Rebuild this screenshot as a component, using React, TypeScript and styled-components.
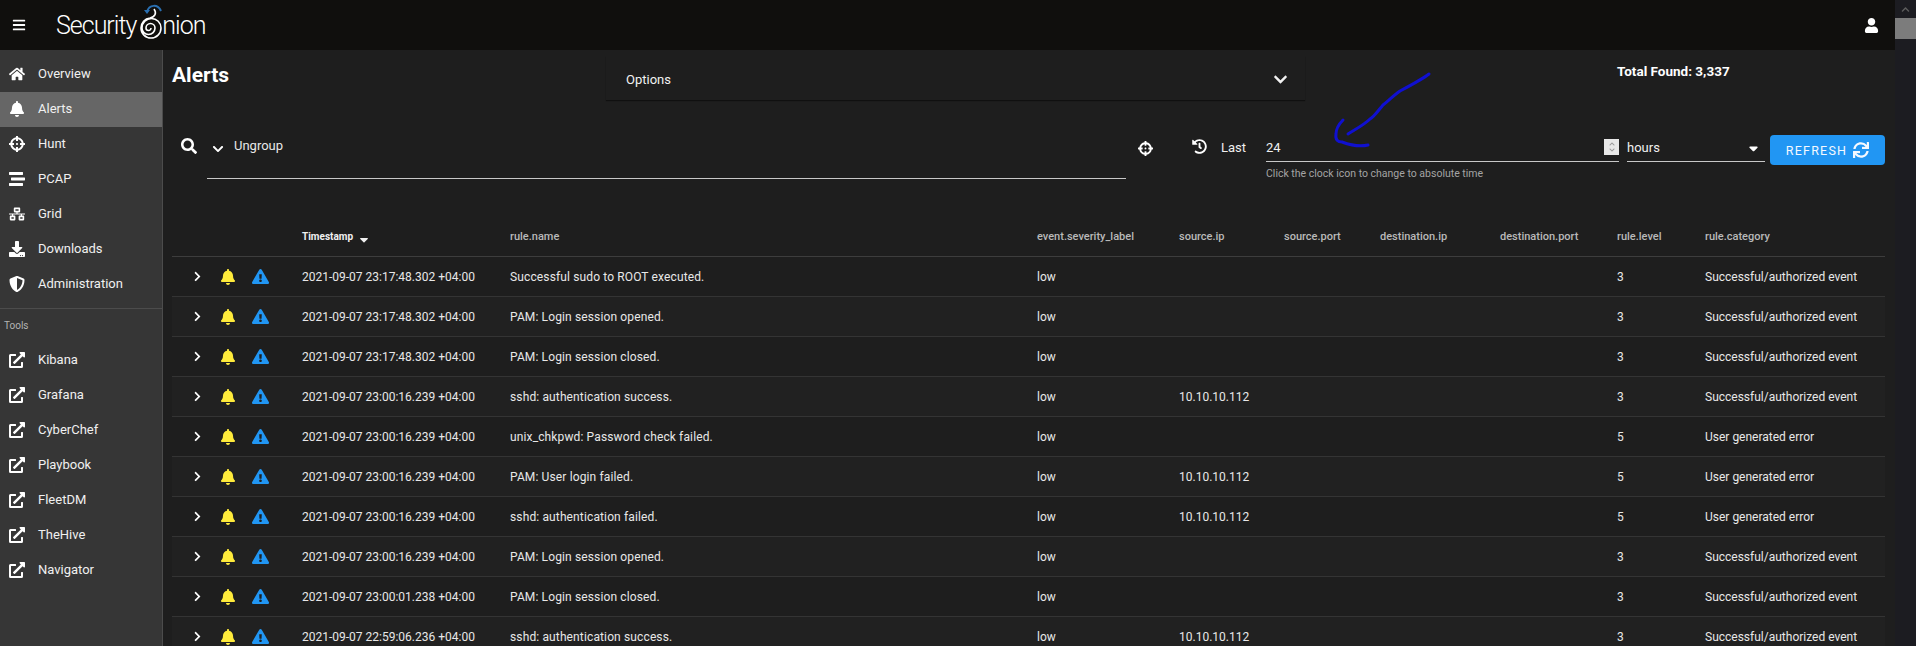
import React from "react";
import styled, { createGlobalStyle } from "styled-components";
import {
  FaBars,
  FaBell,
  FaChevronDown,
  FaChevronRight,
  FaChevronUp,
  FaCrosshairs,
  FaDownload,
  FaExclamationTriangle,
  FaExternalLinkAlt,
  FaHistory,
  FaHome,
  FaNetworkWired,
  FaSearch,
  FaShieldAlt,
  FaSortDown,
  FaStream,
  FaSync,
  FaUser,
} from "react-icons/fa";

const GlobalStyle = createGlobalStyle`
  html, body {
    margin: 0;
    height: 100%;
    overflow: hidden;
    background: #1e1e1e;
    font-family: Roboto, "Liberation Sans", sans-serif;
    color: #fff;
  }
`;

const COLUMNS = "130px 208px 527px 142px 105px 96px 120px 117px 88px 181px";

const Shell = styled.div`
  position: relative;
  display: flex;
  width: 100%;
  height: 100vh;
  overflow: hidden;
`;

const Page = styled.div`
  flex: 1;
  min-width: 0;
  display: flex;
  flex-direction: column;
`;

const TopBar = styled.header`
  flex: 0 0 50px;
  display: flex;
  align-items: center;
  padding: 0 16px 0 12px;
  background: #100f0d;
  font-size: 14px;
`;

const Logo = styled.div`
  display: flex;
  align-items: center;
  margin-left: 30px;
  font-family: Roboto, sans-serif;
  font-weight: 300;
  font-size: 25px;
  letter-spacing: -1px;
  color: #fff;
`;

const LogoMark = styled.svg`
  width: 24px;
  height: 42px;
  margin: -6px 0 0 2px;
`;

const UserSlot = styled.div`
  margin-left: auto;
  display: flex;
  font-size: 15px;
`;

const Body = styled.div`
  flex: 1;
  min-height: 0;
  display: flex;
`;

const Sidebar = styled.nav`
  flex: 0 0 162px;
  padding-top: 7px;
  background: #363636;
  border-right: 1px solid #4c4c4c;
`;

const NavItem = styled.div<{ $active?: boolean }>`
  height: 33px;
  display: flex;
  align-items: center;
  padding: 0 0 2px 9px;
  font-size: 13px;
  color: #f0f0f0;
  background: ${(p) => (p.$active ? "#666666" : "transparent")};
`;

const NavIcon = styled.span`
  flex: 0 0 29px;
  display: flex;
  align-items: center;
  font-size: 16px;
  color: #fff;
`;

const NavDivider = styled.div`
  height: 1px;
  margin-top: 6px;
  background: #4c4c4c;
`;

const NavHeading = styled.div`
  height: 34px;
  padding-left: 4px;
  line-height: 34px;
  font-size: 10px;
  color: #b4b4b4;
`;

const Main = styled.main`
  flex: 1;
  min-width: 0;
  padding: 6px 10px 0 9px;
`;

const HeadRow = styled.div`
  display: flex;
  align-items: flex-start;
`;

const Title = styled.h1`
  flex: 0 0 434px;
  margin: 7px 0 0;
  font-size: 21px;
  line-height: 24px;
  font-weight: 700;
`;

const OptionsPanel = styled.div`
  flex: 0 0 699px;
  height: 44px;
  box-sizing: border-box;
  display: flex;
  align-items: center;
  justify-content: space-between;
  padding: 2px 17px 0 20px;
  font-size: 13px;
  color: #f2f2f2;
  background: #1e1e1e;
  box-shadow: 0 1px 1px rgba(0, 0, 0, 0.45);
  & > svg {
    font-size: 15px;
  }
`;

const TotalFound = styled.div`
  margin: 7px 0 0 312px;
  font-size: 13.5px;
  line-height: 16px;
  font-weight: 700;
`;

const FilterRow = styled.div`
  display: flex;
  align-items: flex-start;
  margin-top: 30px;
`;

const SearchGroup = styled.div`
  flex: 0 0 954px;
  display: flex;
  padding-left: 9px;
  box-sizing: border-box;
`;

const SearchIconSlot = styled.span`
  flex: 0 0 26px;
  display: flex;
  padding-top: 8px;
  font-size: 16px;
`;

const SearchBox = styled.div`
  flex: 1;
  height: 48px;
  display: flex;
  align-items: flex-start;
  gap: 10px;
  padding-left: 5px;
  border-bottom: 1px solid #c8c8c8;
  font-size: 13px;
  color: #e8e8e8;
`;

const GroupChevron = styled.span`
  display: flex;
  padding-top: 13px;
  font-size: 12px;
  color: #fff;
`;

const GroupLabel = styled.span`
  padding-top: 8px;
  line-height: 16px;
`;

const ActionIcon = styled.span<{ $left: number; $top: number }>`
  display: flex;
  margin-left: ${(p) => p.$left}px;
  padding-top: ${(p) => p.$top}px;
  font-size: 15px;
`;

const LastLabel = styled.span`
  margin-left: 14px;
  padding-top: 10px;
  width: 46px;
  font-size: 13px;
  line-height: 16px;
  color: #f0f0f0;
`;

const TimeColumn = styled.div`
  flex: 0 0 353px;
`;

const FieldLine = styled.div`
  height: 31px;
  display: flex;
  align-items: flex-start;
  justify-content: space-between;
  border-bottom: 1px solid #c8c8c8;
  font-size: 13px;
  color: #f0f0f0;
`;

const FieldValue = styled.span`
  padding-top: 10px;
  line-height: 16px;
`;

const Spinner = styled.span`
  width: 15px;
  height: 16px;
  margin-top: 9px;
  display: flex;
  flex-direction: column;
  align-items: center;
  justify-content: center;
  background: #e8e8e8;
  font-size: 6px;
  color: #9a9a9a;
`;

const Hint = styled.div`
  margin-top: 6px;
  font-size: 10.5px;
  line-height: 12px;
  color: #a4a4a4;
`;

const UnitSelect = styled(FieldLine)`
  flex: 0 0 138px;
  margin-left: 8px;
`;

const SelectCaret = styled.span`
  display: flex;
  padding: 8px 4px 0 0;
  font-size: 15px;
  color: #fff;
`;

const RefreshButton = styled.button`
  flex: 0 0 115px;
  height: 30px;
  margin: 5px 0 0 5px;
  display: flex;
  align-items: center;
  justify-content: center;
  gap: 6px;
  padding: 0;
  border: 0;
  border-radius: 4px;
  background: #2196f3;
  color: #f4f9ff;
  font-family: inherit;
  font-size: 12.5px;
  letter-spacing: 1.2px;
  text-transform: uppercase;
  & > svg {
    font-size: 16px;
  }
`;

const Table = styled.div`
  margin-top: 29px;
`;

const HeaderRow = styled.div`
  height: 39px;
  padding-top: 8px;
  display: grid;
  grid-template-columns: ${COLUMNS};
  align-items: center;
  border-bottom: 1px solid #3d3d3d;
  font-size: 11px;
  font-weight: 500;
  color: #b9b9b9;
`;

const SortedHeader = styled.div`
  display: flex;
  align-items: center;
  gap: 4px;
  font-size: 10px;
  font-weight: 700;
  color: #f0f0f0;
  & > svg {
    font-size: 14px;
    margin-top: 1px;
  }
`;

const Row = styled.div<{ $even: boolean }>`
  height: 39px;
  display: grid;
  grid-template-columns: ${COLUMNS};
  align-items: center;
  border-bottom: 1px solid #343434;
  font-size: 12px;
  color: #e8e8e8;
  background: ${(p) => (p.$even ? "#212121" : "#1e1e1e")};
`;

const RuleName = styled.span`
  letter-spacing: 0.13px;
`;

const RowIcons = styled.div`
  display: flex;
  align-items: center;
  padding-left: 20px;
`;

const Expand = styled.span`
  display: flex;
  width: 28px;
  font-size: 11px;
  color: #fff;
`;

const Bell = styled.span`
  display: flex;
  width: 32px;
  font-size: 16px;
  color: #ffeb3b;
`;

const Severity = styled.span`
  display: flex;
  font-size: 17px;
  color: #2196f3;
`;

const Scrollbar = styled.div`
  flex: 0 0 21px;
  display: flex;
  flex-direction: column;
  align-items: stretch;
  background: #1c1c21;
`;

const ScrollArrow = styled.div`
  height: 18px;
  display: flex;
  align-items: center;
  justify-content: center;
  font-size: 9px;
  color: #5c5c5c;
`;

const ScrollThumb = styled.div`
  height: 21px;
  background: #7c7c7c;
`;

const Scribble = styled.svg`
  position: absolute;
  left: 1330px;
  top: 70px;
  width: 104px;
  height: 82px;
  pointer-events: none;
`;

const mainNav = [
  { label: "Overview", icon: <FaHome /> },
  { label: "Alerts", icon: <FaBell />, active: true },
  { label: "Hunt", icon: <FaCrosshairs /> },
  { label: "PCAP", icon: <FaStream /> },
  { label: "Grid", icon: <FaNetworkWired /> },
  { label: "Downloads", icon: <FaDownload /> },
  { label: "Administration", icon: <FaShieldAlt /> },
];

const tools = ["Kibana", "Grafana", "CyberChef", "Playbook", "FleetDM", "TheHive", "Navigator"];

const headers = [
  "rule.name",
  "event.severity_label",
  "source.ip",
  "source.port",
  "destination.ip",
  "destination.port",
  "rule.level",
  "rule.category",
];

const OK = "Successful/authorized event";
const ERR = "User generated error";
const IP = "10.10.10.112";

const alerts = [
  ["2021-09-07 23:17:48.302 +04:00", "Successful sudo to ROOT executed.", "", "3", OK],
  ["2021-09-07 23:17:48.302 +04:00", "PAM: Login session opened.", "", "3", OK],
  ["2021-09-07 23:17:48.302 +04:00", "PAM: Login session closed.", "", "3", OK],
  ["2021-09-07 23:00:16.239 +04:00", "sshd: authentication success.", IP, "3", OK],
  ["2021-09-07 23:00:16.239 +04:00", "unix_chkpwd: Password check failed.", "", "5", ERR],
  ["2021-09-07 23:00:16.239 +04:00", "PAM: User login failed.", IP, "5", ERR],
  ["2021-09-07 23:00:16.239 +04:00", "sshd: authentication failed.", IP, "5", ERR],
  ["2021-09-07 23:00:16.239 +04:00", "PAM: Login session opened.", "", "3", OK],
  ["2021-09-07 23:00:01.238 +04:00", "PAM: Login session closed.", "", "3", OK],
  ["2021-09-07 22:59:06.236 +04:00", "sshd: authentication success.", IP, "3", OK],
];

const App: React.FC = () => (
  <Shell>
    <GlobalStyle />
    <Page>
      <TopBar>
        <FaBars />
        <Logo>
          Security
          <LogoMark viewBox="0 0 24 42" fill="none">
            <path d="M9 11 C11 3 20 3 23 10" stroke="#2a6fb0" strokeWidth="2" />
            <path d="M6 9 L12 9 L9 13 Z" fill="#2a6fb0" />
            <path
              d="M13 27 A2.5 2.5 0 0 1 8 27 A4.5 4.5 0 0 1 17 27 A6.5 6.5 0 0 1 4 27 A9.5 9.5 0 0 1 23 27 A10 10 0 0 1 3 27 A10 10 0 0 1 12 17 C17 16 19 12 16 8"
              stroke="#ffffff"
              strokeWidth="1.6"
            />
          </LogoMark>
          nion
        </Logo>
        <UserSlot>
          <FaUser />
        </UserSlot>
      </TopBar>
      <Body>
        <Sidebar>
          {mainNav.map((n) => (
            <NavItem key={n.label} $active={n.active}>
              <NavIcon>{n.icon}</NavIcon>
              {n.label}
            </NavItem>
          ))}
          <NavDivider />
          <NavHeading>Tools</NavHeading>
          {tools.map((t) => (
            <NavItem key={t}>
              <NavIcon>
                <FaExternalLinkAlt />
              </NavIcon>
              {t}
            </NavItem>
          ))}
        </Sidebar>
        <Main>
          <HeadRow>
            <Title>Alerts</Title>
            <OptionsPanel>
              Options
              <FaChevronDown />
            </OptionsPanel>
            <TotalFound>Total Found: 3,337</TotalFound>
          </HeadRow>
          <FilterRow>
            <SearchGroup>
              <SearchIconSlot>
                <FaSearch />
              </SearchIconSlot>
              <SearchBox>
                <GroupChevron>
                  <FaChevronDown />
                </GroupChevron>
                <GroupLabel>Ungroup</GroupLabel>
              </SearchBox>
            </SearchGroup>
            <ActionIcon $left={12} $top={11}>
              <FaCrosshairs />
            </ActionIcon>
            <ActionIcon $left={39} $top={9}>
              <FaHistory />
            </ActionIcon>
            <LastLabel>Last</LastLabel>
            <TimeColumn>
              <FieldLine>
                <FieldValue>24</FieldValue>
                <Spinner>
                  <FaChevronUp />
                  <FaChevronDown />
                </Spinner>
              </FieldLine>
              <Hint>Click the clock icon to change to absolute time</Hint>
            </TimeColumn>
            <UnitSelect>
              <FieldValue>hours</FieldValue>
              <SelectCaret>
                <FaSortDown />
              </SelectCaret>
            </UnitSelect>
            <RefreshButton>
              Refresh
              <FaSync />
            </RefreshButton>
          </FilterRow>
          <Table>
            <HeaderRow>
              <span />
              <SortedHeader>
                Timestamp
                <FaSortDown />
              </SortedHeader>
              {headers.map((h) => (
                <span key={h}>{h}</span>
              ))}
            </HeaderRow>
            {alerts.map(([time, rule, ip, level, category], i) => (
              <Row key={i} $even={i % 2 === 1}>
                <RowIcons>
                  <Expand>
                    <FaChevronRight />
                  </Expand>
                  <Bell>
                    <FaBell />
                  </Bell>
                  <Severity>
                    <FaExclamationTriangle />
                  </Severity>
                </RowIcons>
                <span>{time}</span>
                <RuleName>{rule}</RuleName>
                <span>low</span>
                <span>{ip}</span>
                <span />
                <span />
                <span />
                <span>{level}</span>
                <span>{category}</span>
              </Row>
            ))}
          </Table>
        </Main>
      </Body>
    </Page>
    <Scrollbar>
      <ScrollArrow>
        <FaChevronUp />
      </ScrollArrow>
      <ScrollThumb />
    </Scrollbar>
    <Scribble viewBox="0 0 104 82" fill="none">
      <path
        d="M99 4 C94 8 87 12 70 21 C63 26 58 31 53 35 C48 41 43 48 40 49 C34 55 24 60 18 64"
        stroke="#1010d0"
        strokeWidth="3"
        strokeLinecap="round"
      />
      <path
        d="M13 50 C9 54 6 58 6 64 C5 70 8 72 12 72 C20 75 30 77 38 75"
        stroke="#1010d0"
        strokeWidth="3"
        strokeLinecap="round"
      />
    </Scribble>
  </Shell>
);

export default App;
